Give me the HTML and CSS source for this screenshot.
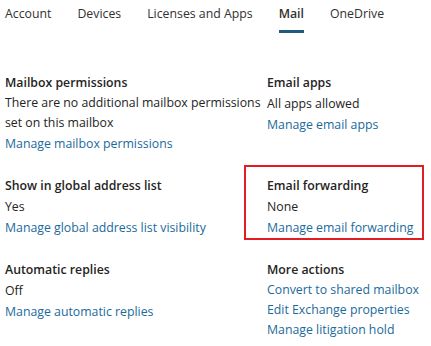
FILE: index.html
```html
<!DOCTYPE html>
<html lang="en">
<head>
  <meta charset="UTF-8">
  <meta name="viewport" content="width=device-width, initial-scale=1.0">
  <title>Mail settings</title>
  <link rel="stylesheet" href="styles.css">
</head>
<body>

  <nav class="tabs">
    <a class="tab">Account</a>
    <a class="tab">Devices</a>
    <a class="tab">Licenses and Apps</a>
    <a class="tab active">Mail</a>
    <a class="tab">OneDrive</a>
  </nav>

  <div class="details">
    <section class="group">
      <h3>Mailbox permissions</h3>
      <p class="wrap">There are no additional mailbox permissions set on this mailbox</p>
      <a class="link">Manage mailbox permissions</a>
    </section>
    <section class="group">
      <h3>Email apps</h3>
      <p>All apps allowed</p>
      <a class="link">Manage email apps</a>
    </section>

    <section class="group">
      <h3>Show in global address list</h3>
      <p>Yes</p>
      <a class="link">Manage global address list visibility</a>
    </section>
    <section class="group highlighted">
      <h3>Email forwarding</h3>
      <p>None</p>
      <a class="link">Manage email forwarding</a>
    </section>

    <section class="group">
      <h3>Automatic replies</h3>
      <p>Off</p>
      <a class="link">Manage automatic replies</a>
    </section>
    <section class="group actions">
      <h3>More actions</h3>
      <a class="link">Convert to shared mailbox</a>
      <a class="link">Edit Exchange properties</a>
      <a class="link">Manage litigation hold</a>
    </section>
  </div>

</body>
</html>
```

FILE: styles.css
```css
body {
  margin: 0;
  font-family: 'Open Sans', 'Noto Sans', sans-serif;
  font-size: 12.3px;
  color: #252423;
  background: #fff;
}

.tabs {
  display: flex;
  gap: 26px;
  padding: 4px 5px 0;
}

.tab {
  line-height: 20px;
  padding-bottom: 6px;
  border-bottom: 3px solid transparent;
  color: #323130;
}

.tab.active {
  font-weight: 600;
  border-bottom-color: #1d5c7c;
}

.details {
  display: grid;
  grid-template-columns: 262px 1fr;
  row-gap: 20px;
  padding: 39px 5px 0;
}

.group {
  display: flex;
  flex-direction: column;
  align-items: flex-start;
  position: relative;
}

.group h3 {
  margin: 0;
  font-size: 12.3px;
  font-weight: 600;
  line-height: 21px;
}

.group p {
  margin: 0;
  line-height: 21px;
}

.group p.wrap {
  line-height: 20px;
}

.link {
  color: #1b6a9c;
  line-height: 22px;
  white-space: nowrap;
  cursor: pointer;
}

.actions .link {
  line-height: 20px;
}

/* annotation box */
.highlighted::after {
  content: '';
  position: absolute;
  top: -10px;
  left: -23px;
  width: 176px;
  height: 71px;
  border: 2px solid #e31c23;
}
```
